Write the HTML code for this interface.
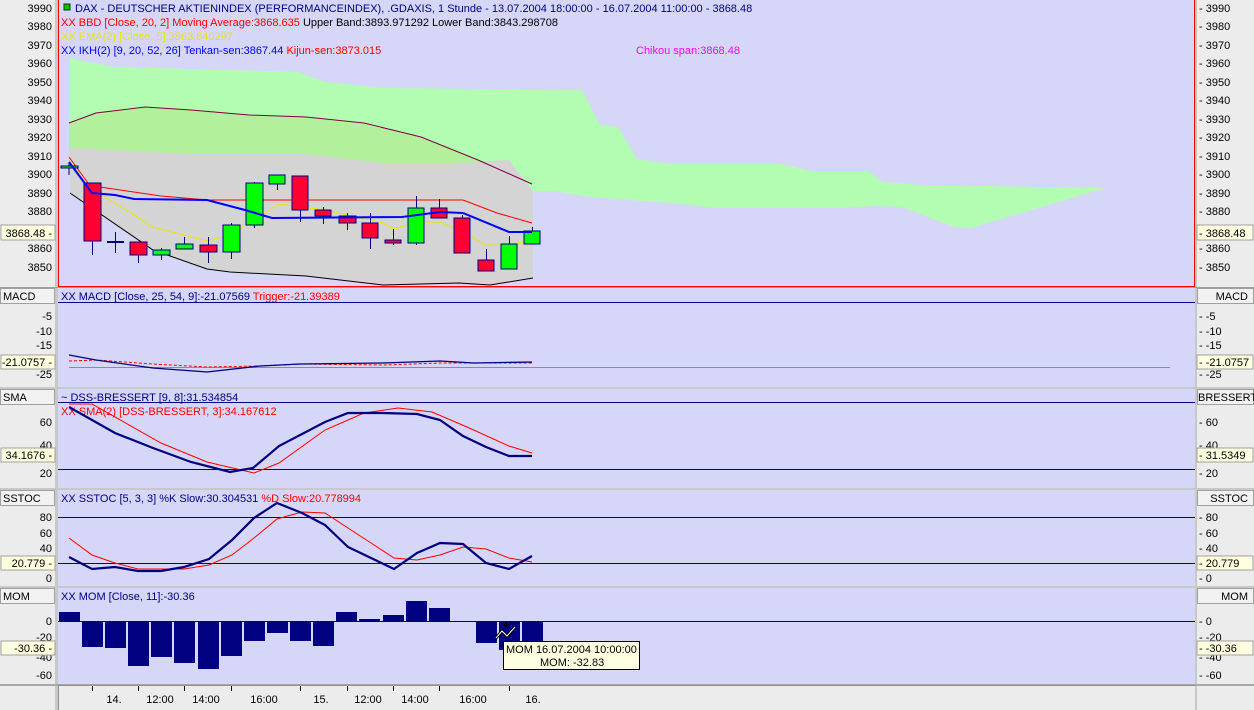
<!DOCTYPE html>
<html><head><meta charset="utf-8"><style>
html,body{margin:0;padding:0;width:1254px;height:710px;overflow:hidden;background:#ececec}
svg{display:block}
text{font-family:"Liberation Sans",sans-serif;font-size:11px}
</style></head><body>
<svg width="1254" height="710" xmlns="http://www.w3.org/2000/svg">
<defs><clipPath id="rc"><rect x="1197" y="388" width="57" height="17"/></clipPath></defs>
<rect x="0" y="0" width="1254" height="710" fill="#ececec"/>
<rect x="55" y="0" width="3" height="710" fill="#c8c8c8"/>
<rect x="1195" y="0" width="2" height="710" fill="#c8c8c8"/>
<rect x="0" y="287" width="1254" height="1" fill="#a0a0a0"/>
<rect x="0" y="387" width="1254" height="2" fill="#c8c8c8"/>
<rect x="0" y="488" width="1254" height="2" fill="#c8c8c8"/>
<rect x="0" y="586" width="1254" height="2" fill="#c8c8c8"/>
<rect x="0" y="684" width="1254" height="2" fill="#a8a8a8"/>
<rect x="58" y="0" width="1137" height="287" fill="#d6d6f8"/>
<rect x="58" y="288" width="1137" height="99" fill="#d6d6f8"/>
<rect x="58" y="389" width="1137" height="99" fill="#d6d6f8"/>
<rect x="58" y="490" width="1137" height="96" fill="#d6d6f8"/>
<rect x="58" y="588" width="1137" height="96" fill="#d6d6f8"/>

<polygon fill="#b3fdb3" points="69,57 77,60 115,67 230,70 298,72 325,82 383,88 582,90 600,125 618,127 637,159 672,164 781,164 813,171 868,171 883,182 923,185 1105,188 971,228 954,227 902,207 876,206 843,208 715,208 672,203 589,197 555,191 533,191 509,160 459,163 383,163 306,154 191,154 69,148"/>
<polygon fill="#b2f09c" points="69,123 96,113 145,107 191,110 249,115 306,117 364,123 421,137 478,160 509,165 509,160 459,163 383,163 306,154 191,154 69,148"/>
<polygon fill="#d4d4d4" points="69,148 191,154 306,154 383,163 459,163 509,160 533,192 533,278 490,285 459,283 421,284 383,285 306,276 230,272 207,269 153,250 70,193"/>
<polyline fill="none" stroke="#800040" stroke-width="1" points="69,123 96,113 145,107 191,110 249,115 306,117 364,123 421,137 478,160 532,184"/>
<polyline fill="none" stroke="#000" stroke-width="1" points="70,193 153,250 207,269 230,272 306,276 383,285 421,284 459,283 490,285 533,278"/>
<polyline fill="none" stroke="#ff0000" stroke-width="1" points="69,157 88,183 100,187 161,196 207,200 463,200 497,213 532,223"/>
<polyline fill="none" stroke="#e8e800" stroke-width="1" points="69,160 88,187 115,203 153,227 207,241 230,235 279,204 325,210 383,223 394,229 417,222 440,222 463,232 486,245 509,245 532,240"/>

<g stroke="#000080" stroke-width="1">
<line x1="69" y1="163" x2="69" y2="175"/><rect x="61" y="166" width="17" height="2" fill="#00ff00"/>
<line x1="92.5" y1="183" x2="92.5" y2="255"/><rect x="84" y="183" width="17" height="58" fill="#ff0033"/>
<line x1="115.5" y1="232" x2="115.5" y2="253"/><line x1="107" y1="242" x2="124" y2="242" stroke-width="2"/>
<line x1="138.5" y1="242" x2="138.5" y2="263"/><rect x="130" y="242" width="17" height="13" fill="#ff0033"/>
<line x1="161.5" y1="248" x2="161.5" y2="260"/><rect x="153" y="250" width="17" height="5" fill="#00ff00"/>
<line x1="184.5" y1="237" x2="184.5" y2="249"/><rect x="176" y="244" width="17" height="5" fill="#00ff00"/>
<line x1="208.5" y1="237" x2="208.5" y2="263"/><rect x="200" y="245" width="17" height="7" fill="#ff0033"/>
<line x1="231.5" y1="223" x2="231.5" y2="259"/><rect x="223" y="225" width="17" height="27" fill="#00ff00"/>
<line x1="254.5" y1="182" x2="254.5" y2="228"/><rect x="246" y="183" width="17" height="42" fill="#00ff00"/>
<line x1="277.5" y1="175" x2="277.5" y2="190"/><rect x="269" y="175" width="16" height="9" fill="#00ff00"/>
<line x1="300.5" y1="176" x2="300.5" y2="222"/><rect x="292" y="176" width="16" height="34" fill="#ff0033"/>
<line x1="323.5" y1="207" x2="323.5" y2="224"/><rect x="315" y="210" width="16" height="6" fill="#ff0033"/>
<line x1="347.5" y1="213" x2="347.5" y2="230"/><rect x="339" y="216" width="17" height="7" fill="#ff0033"/>
<line x1="370.5" y1="213" x2="370.5" y2="249"/><rect x="362" y="223" width="16" height="15" fill="#ff0033"/>
<line x1="393.5" y1="229" x2="393.5" y2="245"/><rect x="385" y="240" width="16" height="3" fill="#ff0033"/>
<line x1="416.5" y1="196" x2="416.5" y2="245"/><rect x="408" y="208" width="16" height="35" fill="#00ff00"/>
<line x1="439.5" y1="199" x2="439.5" y2="218"/><rect x="431" y="208" width="16" height="10" fill="#ff0033"/>
<line x1="462.5" y1="215" x2="462.5" y2="253"/><rect x="454" y="218" width="16" height="35" fill="#ff0033"/>
<line x1="486.5" y1="249" x2="486.5" y2="271"/><rect x="478" y="260" width="16" height="11" fill="#ff0033"/>
<line x1="509.5" y1="236" x2="509.5" y2="269"/><rect x="501" y="244" width="16" height="25" fill="#00ff00"/>
<line x1="532.5" y1="227" x2="532.5" y2="244"/><rect x="524" y="231" width="16" height="13" fill="#00ff00"/>
</g>
<polyline fill="none" stroke="#0000ff" stroke-width="2" points="69,162 92,193 115,195 134,199 207,200 245,210 272,218 402,217 440,212 463,213 509,232 532,232"/>

<line x1="58.5" y1="0" x2="58.5" y2="287" stroke="#ff0000"/>
<line x1="1194.5" y1="0" x2="1194.5" y2="287" stroke="#ff0000"/>
<line x1="58" y1="286.5" x2="1195" y2="286.5" stroke="#ff0000"/>

<rect x="64" y="4" width="6" height="6" fill="#00c000" stroke="#004000" stroke-width="1"/>
<text x="75" y="12" fill="#000080">DAX  - DEUTSCHER AKTIENINDEX (PERFORMANCEINDEX), .GDAXIS, 1 Stunde - 13.07.2004 18:00:00 - 16.07.2004 11:00:00 - 3868.48</text>
<text x="61" y="26"><tspan fill="#ff0000">XX BBD [Close, 20, 2] Moving Average:3868.635 </tspan><tspan fill="#000">Upper Band:3893.971292 Lower Band:3843.298708</tspan></text>
<text x="61" y="40" fill="#e8e800">XX EMA(2) [Close, 5]:3863.840297</text>
<text x="61" y="54"><tspan fill="#0000ff">XX IKH(2) [9, 20, 52, 26] Tenkan-sen:3867.44 </tspan><tspan fill="#ff0000">Kijun-sen:3873.015</tspan></text>
<text x="636" y="54" fill="#ff00ff">Chikou span:3868.48</text>

<g fill="#000" text-anchor="end">
<text x="52" y="12">3990</text><text x="52" y="30">3980</text><text x="52" y="49">3970</text><text x="52" y="67">3960</text><text x="52" y="86">3950</text><text x="52" y="104">3940</text><text x="52" y="123">3930</text><text x="52" y="141">3920</text><text x="52" y="160">3910</text><text x="52" y="178">3900</text><text x="52" y="197">3890</text><text x="52" y="215">3880</text><text x="52" y="252">3860</text><text x="52" y="271">3850</text>
</g>
<g fill="#000">
<text x="1199" y="12">- 3990</text><text x="1199" y="30">- 3980</text><text x="1199" y="49">- 3970</text><text x="1199" y="67">- 3960</text><text x="1199" y="86">- 3950</text><text x="1199" y="104">- 3940</text><text x="1199" y="123">- 3930</text><text x="1199" y="141">- 3920</text><text x="1199" y="160">- 3910</text><text x="1199" y="178">- 3900</text><text x="1199" y="197">- 3890</text><text x="1199" y="215">- 3880</text><text x="1199" y="252">- 3860</text><text x="1199" y="271">- 3850</text>
</g>
<rect x="1" y="225" width="54" height="15" fill="#ffffe0" stroke="#a0a0a0"/>
<text x="52" y="237" text-anchor="end">3868.48 -</text>
<rect x="1197" y="225" width="56" height="15" fill="#ffffe0" stroke="#a0a0a0"/>
<text x="1199" y="237">- 3868.48</text>

<g stroke="#a0a0a0" fill="#f2f2f2">
<rect x="0.5" y="288.5" width="54" height="15"/><rect x="1197.5" y="288.5" width="56" height="15"/>
<rect x="0.5" y="389.5" width="54" height="15"/><rect x="1197.5" y="389.5" width="56" height="15"/>
<rect x="0.5" y="490.5" width="54" height="15"/><rect x="1197.5" y="490.5" width="56" height="15"/>
<rect x="0.5" y="588.5" width="54" height="15"/><rect x="1197.5" y="588.5" width="56" height="15"/>
</g>
<text x="3" y="300">MACD</text><text x="1248" y="300" text-anchor="end">MACD</text>
<text x="3" y="401">SMA</text><text x="1198" y="401" clip-path="url(#rc)">BRESSERT</text>
<text x="3" y="502">SSTOC</text><text x="1248" y="502" text-anchor="end">SSTOC</text>
<text x="3" y="600">MOM</text><text x="1248" y="600" text-anchor="end">MOM</text>

<text x="61" y="300"><tspan fill="#000080">XX MACD [Close, 25, 54, 9]:-21.07569 </tspan><tspan fill="#ff0000">Trigger:-21.39389</tspan></text>
<line x1="58" y1="302.5" x2="1195" y2="302.5" stroke="#000080"/>
<line x1="69" y1="367.5" x2="1170" y2="367.5" stroke="#8080ff"/>
<polyline fill="none" stroke="#ff0000" stroke-dasharray="3,2" points="69,361 96,360 153,364 207,367 260,366 300,364 383,365 440,363 474,363 532,363"/>
<polyline fill="none" stroke="#000080" stroke-width="1.3" points="69,355 96,360 153,368 207,372 260,366 300,364 383,363 440,361 474,363 532,362"/>
<g text-anchor="end"><text x="52" y="320">-5</text><text x="52" y="335">-10</text><text x="52" y="349">-15</text><text x="52" y="378">-25</text></g>
<text x="1199" y="320">- -5</text><text x="1199" y="335">- -10</text><text x="1199" y="349">- -15</text><text x="1199" y="378">- -25</text>
<rect x="1" y="355" width="54" height="14" fill="#ffffe0" stroke="#a0a0a0"/><text x="52" y="366" text-anchor="end">-21.0757 -</text>
<rect x="1197" y="355" width="56" height="14" fill="#ffffe0" stroke="#a0a0a0"/><text x="1199" y="366">- -21.0757</text>

<text x="61" y="401" fill="#000080">~ DSS-BRESSERT [9, 8]:31.534854</text>
<line x1="58" y1="402.5" x2="1195" y2="402.5" stroke="#000080"/>
<text x="61" y="415" fill="#ff0000">XX SMA(2) [DSS-BRESSERT, 3]:34.167612</text>
<line x1="58" y1="469.5" x2="1195" y2="469.5" stroke="#000080"/>
<polyline fill="none" stroke="#ff0000" points="69,404 92,404 161,443 207,462 254,473 279,463 325,430 364,413 398,408 432,412 467,427 509,446 532,453"/>
<polyline fill="none" stroke="#000080" stroke-width="2.2" points="69,407 115,433 153,448 191,462 230,472 253,468 279,446 325,422 348,413 383,413 417,414 440,420 463,436 486,447 509,456 532,456"/>
<g text-anchor="end"><text x="52" y="426">60</text><text x="52" y="449">40</text><text x="52" y="477">20</text></g>
<text x="1199" y="426">- 60</text><text x="1199" y="449">- 40</text><text x="1199" y="477">- 20</text>
<rect x="1" y="448" width="54" height="14" fill="#ffffe0" stroke="#a0a0a0"/><text x="52" y="459" text-anchor="end">34.1676 -</text>
<rect x="1197" y="448" width="56" height="14" fill="#ffffe0" stroke="#a0a0a0"/><text x="1199" y="459">- 31.5349</text>

<text x="61" y="502"><tspan fill="#000080">XX SSTOC [5, 3, 3] %K Slow:30.304531 </tspan><tspan fill="#ff0000">%D Slow:20.778994</tspan></text>
<line x1="58" y1="517.5" x2="1195" y2="517.5" stroke="#000080"/>
<line x1="58" y1="563.5" x2="1195" y2="563.5" stroke="#000080"/>
<polyline fill="none" stroke="#ff0000" points="69,538 92,555 115,563 138,569 184,569 209,565 232,555 254,538 277,519 302,512 325,513 348,528 371,543 394,558 417,560 440,555 463,547 486,549 509,558 532,562"/>
<polyline fill="none" stroke="#000080" stroke-width="2.2" points="69,557 92,569 115,567 138,571 161,571 184,567 209,559 232,540 254,518 277,503 302,513 325,525 348,547 371,558 394,569 417,553 440,543 463,544 486,563 509,569 532,556"/>
<g text-anchor="end"><text x="52" y="521">80</text><text x="52" y="537">60</text><text x="52" y="552">40</text><text x="52" y="582">0</text></g>
<text x="1199" y="521">- 80</text><text x="1199" y="537">- 60</text><text x="1199" y="552">- 40</text><text x="1199" y="582">- 0</text>
<rect x="1" y="556" width="54" height="14" fill="#ffffe0" stroke="#a0a0a0"/><text x="52" y="567" text-anchor="end">20.779 -</text>
<rect x="1197" y="556" width="56" height="14" fill="#ffffe0" stroke="#a0a0a0"/><text x="1199" y="567">- 20.779</text>

<text x="61" y="600" fill="#000080">XX MOM [Close, 11]:-30.36</text>
<line x1="58" y1="621.5" x2="1195" y2="621.5" stroke="#000080"/>
<g fill="#000080">
<rect x="59" y="612" width="21" height="9"/>
<rect x="82" y="621" width="21" height="26"/>
<rect x="105" y="621" width="21" height="27"/>
<rect x="128" y="621" width="21" height="45"/>
<rect x="151" y="621" width="21" height="36"/>
<rect x="174" y="621" width="21" height="42"/>
<rect x="198" y="621" width="21" height="48"/>
<rect x="221" y="621" width="21" height="35"/>
<rect x="244" y="621" width="21" height="20"/>
<rect x="267" y="621" width="21" height="12"/>
<rect x="290" y="621" width="21" height="20"/>
<rect x="313" y="621" width="21" height="25"/>
<rect x="336" y="612" width="21" height="9"/>
<rect x="359" y="619" width="21" height="2"/>
<rect x="383" y="615" width="21" height="6"/>
<rect x="406" y="601" width="21" height="20"/>
<rect x="429" y="608" width="21" height="13"/>
<rect x="476" y="621" width="21" height="22"/>
<rect x="499" y="621" width="21" height="29"/>
<rect x="522" y="621" width="21" height="22"/>
</g>
<g text-anchor="end"><text x="52" y="625">0</text><text x="52" y="641">-20</text><text x="52" y="661">-40</text><text x="52" y="679">-60</text></g>
<text x="1199" y="625">- 0</text><text x="1199" y="641">- -20</text><text x="1199" y="661">- -40</text><text x="1199" y="679">- -60</text>
<rect x="1" y="641" width="54" height="14" fill="#ffffe0" stroke="#a0a0a0"/><text x="52" y="652" text-anchor="end">-30.36 -</text>
<rect x="1197" y="641" width="56" height="14" fill="#ffffe0" stroke="#a0a0a0"/><text x="1199" y="652">- -30.36</text>
<polyline fill="none" stroke="#000" stroke-width="3" points="496,638 502,631 507,636 515,627"/>
<polyline fill="none" stroke="#fff" stroke-width="1" points="496,638 502,631 507,636 515,627"/>
<path d="M506 622v6M503 625h6" stroke="#000" stroke-width="2"/>
<rect x="503.5" y="641.5" width="136" height="28" fill="#ffffe1" stroke="#000"/>
<text x="506" y="653">MOM  16.07.2004 10:00:00</text>
<text x="540" y="666">MOM: -32.83</text>

<rect x="58" y="686" width="1137" height="24" fill="#ececec"/>
<line x1="58" y1="685.5" x2="1195" y2="685.5" stroke="#909090"/>
<line x1="58.5" y1="685" x2="58.5" y2="710" stroke="#909090"/>
<g stroke="#000"><line x1="92.5" y1="686" x2="92.5" y2="691"/><line x1="138.5" y1="686" x2="138.5" y2="691"/><line x1="184.5" y1="686" x2="184.5" y2="691"/><line x1="231.5" y1="686" x2="231.5" y2="691"/><line x1="300.5" y1="686" x2="300.5" y2="691"/><line x1="347.5" y1="686" x2="347.5" y2="691"/><line x1="393.5" y1="686" x2="393.5" y2="691"/><line x1="439.5" y1="686" x2="439.5" y2="691"/><line x1="509.5" y1="686" x2="509.5" y2="691"/></g>
<g text-anchor="middle"><text x="114" y="703">14.</text><text x="160" y="703">12:00</text><text x="206" y="703">14:00</text><text x="264" y="703">16:00</text><text x="321" y="703">15.</text><text x="368" y="703">12:00</text><text x="415" y="703">14:00</text><text x="473" y="703">16:00</text><text x="533" y="703">16.</text></g>
</svg>
</body></html>
